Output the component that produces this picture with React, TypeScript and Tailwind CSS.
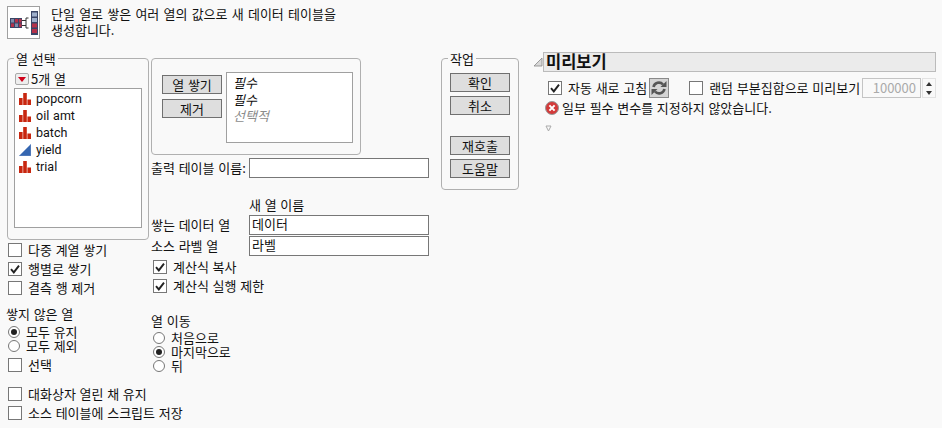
function Check({ on, label, className = '' }: { on?: boolean; label: string; className?: string }) {
  return (
    <div className={`flex items-center h-[19px] ${className}`}>
      <span className="w-[14px] h-[14px] border border-[#777] bg-white flex items-center justify-center shrink-0">
        {on && (
          <svg width="12" height="12" viewBox="0 0 12 12">
            <path d="M2 6.2 L4.8 9.4 L10 2.6" fill="none" stroke="#222" strokeWidth="1.9" />
          </svg>
        )}
      </span>
      <span className="ml-[6px] whitespace-nowrap">{label}</span>
    </div>
  )
}

function Radio({ on, label }: { on?: boolean; label: string }) {
  return (
    <div className="flex items-center h-[14px] leading-[14px]">
      <span className="w-[12px] h-[12px] rounded-full border border-[#777] bg-white flex items-center justify-center shrink-0">
        {on && <span className="w-[6px] h-[6px] rounded-full bg-[#222]" />}
      </span>
      <span className="ml-[6px] whitespace-nowrap">{label}</span>
    </div>
  )
}

function Btn({ label, className = '' }: { label: string; className?: string }) {
  return (
    <div className={`w-[60px] h-[19px] bg-[#dedede] border border-[#707070] flex items-center justify-center whitespace-nowrap ${className}`}>
      {label}
    </div>
  )
}

function Field({ value, className = '' }: { value?: string; className?: string }) {
  return (
    <div className={`w-[180px] h-[20px] bg-white border border-[#777] px-[2px] leading-[16px] ${className}`}>{value}</div>
  )
}

function Bars() {
  return (
    <svg width="12" height="12" viewBox="0 0 12 12">
      <path d="M0 5h3.6v7H0zM4.2 0h3.6v12H4.2zM8.4 6.5H12V12H8.4z" fill="#c8260f" />
    </svg>
  )
}

function Wedge() {
  return (
    <svg width="12" height="12" viewBox="0 0 12 12">
      <path d="M0 12 L12 0 V12 Z" fill="#3566b0" stroke="#8aa6d2" strokeWidth="0.6" />
    </svg>
  )
}

const columns = [
  { name: 'popcorn', icon: <Bars /> },
  { name: 'oil amt', icon: <Bars /> },
  { name: 'batch', icon: <Bars /> },
  { name: 'yield', icon: <Wedge /> },
  { name: 'trial', icon: <Bars /> },
]

function StackIcon() {
  return (
    <div className="w-[33px] h-[33px] bg-white border border-[#a0a0a0] flex items-center justify-center">
      <svg width="31" height="31" viewBox="0 0 31 31">
        <rect x="2" y="11" width="12" height="10" fill="#3a4566" />
        <rect x="3" y="12" width="3" height="3.5" fill="#7f8cab" />
        <rect x="7" y="12" width="3" height="3.5" fill="#b5314a" />
        <rect x="11" y="12" width="2.5" height="3.5" fill="#b5314a" />
        <rect x="3" y="16.5" width="3" height="3.5" fill="#b5314a" />
        <rect x="7" y="16.5" width="3" height="3.5" fill="#7f8cab" />
        <rect x="11" y="16.5" width="2.5" height="3.5" fill="#b5314a" />
        <path d="M14 13.5h4M14 18.5h4M18 11h2.5M18 11v10M18 21h2.5" stroke="#333" fill="none" />
        <rect x="23" y="4" width="7" height="24" fill="#3a4566" />
        <rect x="24" y="5.5" width="5" height="4" fill="#9fb0cc" />
        <rect x="24" y="11" width="5" height="4" fill="#9fb0cc" />
        <rect x="24" y="16.5" width="5" height="4" fill="#b5314a" />
        <rect x="24" y="22" width="5" height="4" fill="#b5314a" />
      </svg>
    </div>
  )
}

export default function App() {
  return (
    <div className="w-[942px] h-[428px] overflow-hidden bg-[#f9f9f9] text-[13px] leading-[16px] text-[#111] [word-spacing:0.8px]" style={{ fontFamily: '"Noto Sans CJK KR", "Noto Sans", sans-serif' }}>
      <div className="flex pt-[6px] pl-[7px] h-[58px]">
        <StackIcon />
        <p className="ml-[11px] leading-[16px] w-[300px] [word-spacing:1.3px]">
          단일 열로 쌓은 여러 열의 값으로 새 데이터 테이블을
          <br />
          생성합니다.
        </p>
      </div>

      <div className="flex">
        {/* left column */}
        <div className="w-[144px] ml-[6px] shrink-0">
          <div className="relative ml-[1px] w-[142px] h-[182px] border border-[#b0b0b0] rounded-[4px] pt-[14px] pl-[6px]">
            <span className="absolute -top-[8px] left-[6px] px-[2px] bg-[#f9f9f9]">열 선택</span>
            <div className="flex items-center h-[12px] ml-[1px]">
              <span className="w-[14px] h-[12px] border border-[#aaa] rounded-[2px] bg-[#eee] flex items-center justify-center">
                <span className="w-0 h-0 border-l-[4px] border-r-[4px] border-t-[5px] border-l-transparent border-r-transparent border-t-[#d0021b]" />
              </span>
              <span className="ml-[2px]">5개 열</span>
            </div>
            <div className="mt-[3px] w-[128px] h-[140px] bg-white border border-[#a0a0a0] pt-[2px] pl-[4px] text-[12.5px]" style={{ fontFamily: 'Roboto, sans-serif' }}>
              {columns.map((c) => (
                <div key={c.name} className="flex items-center h-[16.8px]">
                  {c.icon}
                  <span className="ml-[5px]">{c.name}</span>
                </div>
              ))}
            </div>
          </div>
          <div className="ml-[2px]">
            <Check label="다중 계열 쌓기" />
            <Check on label="행별로 쌓기" />
            <Check label="결측 행 제거" />
          </div>
          <p className="mt-[9px] h-[16px] leading-[16px]">쌓지 않은 열</p>
          <div className="ml-[2px] mt-[3px]">
            <Radio on label="모두 유지" />
            <Radio label="모두 제외" />
            <Check label="선택" className="mt-[2px]" />
            <Check label="대화상자 열린 채 유지" className="mt-[10px]" />
            <Check label="소스 테이블에 스크립트 저장" />
          </div>
        </div>

        {/* middle column */}
        <div className="w-[278px] ml-[1px] shrink-0">
          <div className="w-[210px] h-[97px] border border-[#b0b0b0] rounded-[4px] flex pt-[13px] pl-[10px]">
            <div className="pt-[3px]">
              <Btn label="열 쌓기" />
              <Btn label="제거" className="mt-[5px]" />
            </div>
            <div className="ml-[4px] w-[127px] h-[71px] bg-white border border-[#a0a0a0] pl-[6px] pt-[2px] leading-[16.5px] italic">
              <div>필수</div>
              <div>필수</div>
              <div className="text-[#8c8c8c]">선택적</div>
            </div>
          </div>
          <div className="flex items-center mt-[3px] h-[20px]">
            <span className="w-[98px] whitespace-nowrap">출력 테이블 이름:</span>
            <Field />
          </div>
          <p className="ml-[98px] mt-[19px] h-[16px]">새 열 이름</p>
          <div className="flex items-center mt-[2px] h-[20px]">
            <span className="w-[98px] whitespace-nowrap">쌓는 데이터 열</span>
            <Field value="데이터" />
          </div>
          <div className="flex items-center h-[20px] mt-[1px]">
            <span className="w-[98px] whitespace-nowrap">소스 라벨 열</span>
            <Field value="라벨" />
          </div>
          <div className="ml-[2px] mt-[1px]">
            <Check on label="계산식 복사" />
            <Check on label="계산식 실행 제한" />
          </div>
          <p className="mt-[18px] h-[16px]">열 이동</p>
          <div className="ml-[2px] mt-[2px]">
            <Radio label="처음으로" />
            <Radio on label="마지막으로" />
            <Radio label="뒤" />
          </div>
        </div>

        {/* action column */}
        <div className="relative ml-[12px] w-[78px] h-[132px] border border-[#b0b0b0] rounded-[4px] pt-[14px] pl-[8px] shrink-0">
          <span className="absolute -top-[8px] left-[6px] px-[2px] bg-[#f9f9f9]">작업</span>
          <Btn label="확인" />
          <Btn label="취소" className="mt-[4px]" />
          <Btn label="재호출" className="mt-[21px]" />
          <Btn label="도움말" className="mt-[4px]" />
        </div>

        {/* preview */}
        <div className="ml-[14px] w-[403px] -mt-[6px]">
          <div className="flex items-center">
            <svg width="10" height="10" viewBox="0 0 10 10" className="shrink-0">
              <path d="M1 9 L9 1 V9 Z" fill="#d8d8d8" stroke="#888" strokeWidth="0.8" />
            </svg>
            <div className="w-[393px] h-[20px] bg-[#ebebeb] border border-[#bbb] pl-[2px] text-[16.5px] leading-[17px] font-bold">미리보기</div>
          </div>
          <div className="flex items-center mt-[6px] ml-[15px] h-[20px]">
            <Check on label="자동 새로 고침" />
            <span className="ml-[2px] w-[20px] h-[20px] bg-[#d4d4d4] border border-[#8a8a8a] flex items-center justify-center">
              <svg width="16" height="16" viewBox="0 0 16 16" fill="none" stroke="#555" strokeWidth="2.6">
                <path d="M2.5 7 A5.5 5.5 0 0 1 12 4.5" />
                <path d="M13.5 9 A5.5 5.5 0 0 1 4 11.5" />
                <path d="M9.5 7h6V1z" fill="#555" stroke="none" />
                <path d="M6.5 9h-6v6z" fill="#555" stroke="none" />
              </svg>
            </span>
            <Check label="랜덤 부분집합으로 미리보기" className="ml-[20px]" />
            <div className="ml-[2px] w-[59px] h-[20px] bg-[#f9f9f9] border border-[#c4c4c4] text-right pr-[4px] text-[#aaa] leading-[18px]">100000</div>
            <div className="ml-[1px] w-[14px] h-[20px] flex flex-col items-center justify-around border border-[#e2e2e2]">
              <span className="w-0 h-0 border-l-[3px] border-r-[3px] border-b-[4px] border-l-transparent border-r-transparent border-b-[#333]" />
              <span className="w-0 h-0 border-l-[3px] border-r-[3px] border-t-[4px] border-l-transparent border-r-transparent border-t-[#333]" />
            </div>
          </div>
          <div className="flex items-center mt-[2px] ml-[12px] h-[16px]">
            <svg width="14" height="14" viewBox="0 0 14 14" className="shrink-0">
              <circle cx="7" cy="7" r="6.5" fill="#d33a3a" stroke="#999" />
              <path d="M4.4 4.4l5.2 5.2M9.6 4.4l-5.2 5.2" stroke="#fff" strokeWidth="2" />
            </svg>
            <span className="ml-[3px] whitespace-nowrap">일부 필수 변수를 지정하지 않았습니다.</span>
          </div>
          <svg width="7" height="7" viewBox="0 0 7 7" className="ml-[12px] mt-[9px]">
            <path d="M1 1h5L3.5 6z" fill="none" stroke="#aaa" />
          </svg>
        </div>
      </div>
    </div>
  )
}
